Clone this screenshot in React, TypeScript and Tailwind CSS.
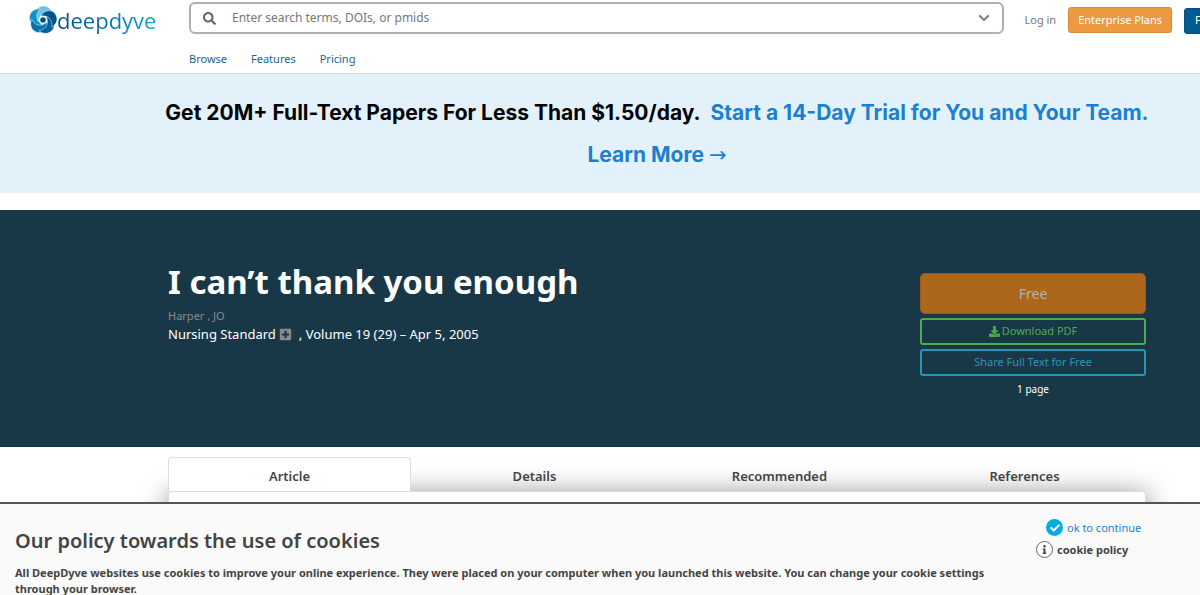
import React from 'react';
import { FaSearch, FaChevronDown, FaDownload, FaPlusSquare, FaCheck, FaInfo } from 'react-icons/fa';

const navLinks = ['Browse', 'Features', 'Pricing'];
const tabs = ['Article', 'Details', 'Recommended', 'References'];

const blades = [
  { angle: 0, color: '#6cc3e6' },
  { angle: 288, color: '#0d93c9' },
  { angle: 216, color: '#0872ae' },
  { angle: 144, color: '#00609a' },
  { angle: 72, color: '#005488' },
];

function Logo() {
  return (
    <a href="#" aria-label="deepdyve" className="flex h-10 w-[160px] shrink-0 items-center">
      <svg className="h-7 w-7 shrink-0" viewBox="0 0 28 28" fill="none">
        {/* Five blades around the eye, light to dark */}
        {blades.map((blade) => (
          <path
            key={blade.angle}
            d="M9.5 15C4 9 7 0 14.5 0C19 0 22.5 3 23.5 8C19 5 11 6 9.5 15Z"
            fill={blade.color}
            stroke="#fff"
            strokeWidth="0.4"
            transform={`rotate(${blade.angle} 14 14)`}
          />
        ))}
        <circle cx="14" cy="14" r="2.8" fill="#005488" />
      </svg>
      <span className="bg-gradient-to-r from-[#005488] via-[#0872ae] to-[#14a3d6] bg-clip-text font-['Open_Sans',sans-serif] text-[22px] leading-8 text-transparent">
        deepdyve
      </span>
    </a>
  );
}

function Header() {
  return (
    <header className="border-b border-[#d5dbde] bg-white pl-[29px]">
      <div className="flex h-10 items-center overflow-hidden">
        <Logo />
        <form className="mb-1 flex h-8 min-w-0 flex-1 items-center rounded-md border-2 border-[#b0b0b0] px-3">
          <FaSearch className="h-[13px] w-[13px] shrink-0 text-[#666]" />
          <input
            type="text"
            aria-label="Search"
            placeholder="Enter search terms, DOIs, or pmids"
            className="ml-4 min-w-0 flex-1 bg-transparent text-[12px] outline-none placeholder:text-[#777]"
          />
          <button type="button" aria-label="Search options">
            <FaChevronDown className="h-3 w-3 text-[#777]" />
          </button>
        </form>
        <a href="#" className="ml-5 shrink-0 text-[11px] text-[#777]">Log in</a>
        <button className="ml-3 h-[26px] shrink-0 rounded-[3px] border border-[#d98a35] bg-[#ec9a40] px-[9px] text-[11px] text-white">
          Enterprise Plans
        </button>
        <div className="ml-3 w-4 shrink-0 overflow-hidden">
          <button className="h-[26px] w-20 rounded-[3px] border border-[#004f80] bg-[#005b91] px-[10px] text-left text-[11px] text-white">
            Free Trial
          </button>
        </div>
      </div>
      <nav className="flex h-[33px] items-start gap-6 pt-[10px] pl-[160px]">
        {navLinks.map((link) => (
          <a key={link} href="#" className="text-[11px] leading-[18px] text-[#1d6492]">{link}</a>
        ))}
      </nav>
    </header>
  );
}

function Promo() {
  return (
    <section className="bg-[#e3f2fa] pt-[18px] pr-10 pb-[17px] pl-[154px] text-center font-['Inter',sans-serif] text-[21px] leading-[42px] font-bold">
      <span className="text-black">Get 20M+ Full-Text Papers For Less Than $1.50/day.</span>
      <a href="#" className="text-[#1c7fd0]">
        &nbsp; Start a 14-Day Trial for You and Your Team.
        <br />
        Learn More <span className="font-['DejaVu_Sans',sans-serif] font-normal">→</span>
      </a>
    </section>
  );
}

function Hero() {
  return (
    <section className="mt-[17px] flex min-h-[237px] justify-between bg-[#193847] pr-[54px] pl-[168px]">
      <div className="pt-[46px]">
        <h1 className="text-[33px] leading-[52px] font-bold text-white">I can’t thank you enough</h1>
        <p className="text-[11px] leading-4 text-[#8a8a8a]">Harper , JO</p>
        <p className="flex items-center text-[13px] leading-[21px] text-white">
          Nursing Standard
          <button aria-label="Follow journal" className="mx-[3px]">
            <FaPlusSquare className="h-[13px] w-[13px] text-[#8a8a8a]" />
          </button>
          <span className="ml-1">, Volume 19 (29) – Apr 5, 2005</span>
        </p>
      </div>
      <div className="flex w-[226px] flex-col gap-1 pt-[63px] text-center text-[11px]">
        <button className="h-[41px] rounded-[5px] border border-[#9c5a17] bg-[#ad671c] text-sm text-[#b5b1ac]">Free</button>
        <button className="flex h-[27px] items-center justify-center gap-[2px] rounded-[3px] border-2 border-[#4fa950] text-[#4fa950]">
          <FaDownload className="h-[11px] w-[11px]" />
          Download PDF
        </button>
        <button className="h-[27px] rounded-[3px] border-2 border-[#2b94b8] text-[#2b94b8]">Share Full Text for Free</button>
        <p className="pt-px text-[10px] leading-4 text-white">1 page</p>
      </div>
    </section>
  );
}

function Tabs() {
  return (
    <section className="pt-[10px] pr-[54px] pl-[168px]">
      <div role="tablist" className="relative z-10 grid grid-cols-4 gap-[2px] text-[13px] font-semibold text-[#444]">
        {tabs.map((tab, i) => (
          <button
            key={tab}
            role="tab"
            aria-selected={i === 0}
            className={`h-[34px] rounded-t border border-b-0 pt-1 ${i === 0 ? 'border-[#ddd] bg-white' : 'border-transparent'}`}
          >
            {tab}
          </button>
        ))}
      </div>
      <div className="min-h-24 rounded-sm border border-[#ddd] bg-white shadow-[0_4px_28px_rgba(0,0,0,0.5)]" />
    </section>
  );
}

function CookieBar() {
  return (
    <aside className="fixed inset-x-0 -bottom-0.5 z-20 flex justify-between border-t-2 border-[#555] bg-[#fafafa] pl-[15px] text-[#444]">
      <div className="max-w-[980px] pt-[21px]">
        <h2 className="text-xl leading-8 font-semibold">Our policy towards the use of cookies</h2>
        <p className="pt-2 text-[11px] leading-4 font-bold">
          All DeepDyve websites use cookies to improve your online experience. They were placed on your computer when you launched this website. You can change your cookie settings through your browser.
        </p>
      </div>
      <div className="flex w-[164px] shrink-0 flex-col gap-[5px] pt-[15px] text-[11px] leading-[17px]">
        <a href="#" className="ml-[10px] flex items-center gap-1 text-[#1c7fd0]">
          <span className="flex h-[17px] w-[17px] items-center justify-center rounded-full bg-[#06aee0]">
            <FaCheck className="h-[10px] w-[10px] text-white" />
          </span>
          ok to continue
        </a>
        <a href="#" className="flex items-center gap-1 font-bold">
          <span className="flex h-[17px] w-[17px] items-center justify-center rounded-full border border-[#666] bg-white">
            <FaInfo className="h-[9px] w-[9px]" />
          </span>
          cookie policy
        </a>
      </div>
    </aside>
  );
}

export default function App() {
  return (
    <div className="min-h-screen overflow-hidden bg-white font-['Noto_Sans',sans-serif]">
      <Header />
      <main>
        <Promo />
        <Hero />
        <Tabs />
      </main>
      <CookieBar />
    </div>
  );
}
